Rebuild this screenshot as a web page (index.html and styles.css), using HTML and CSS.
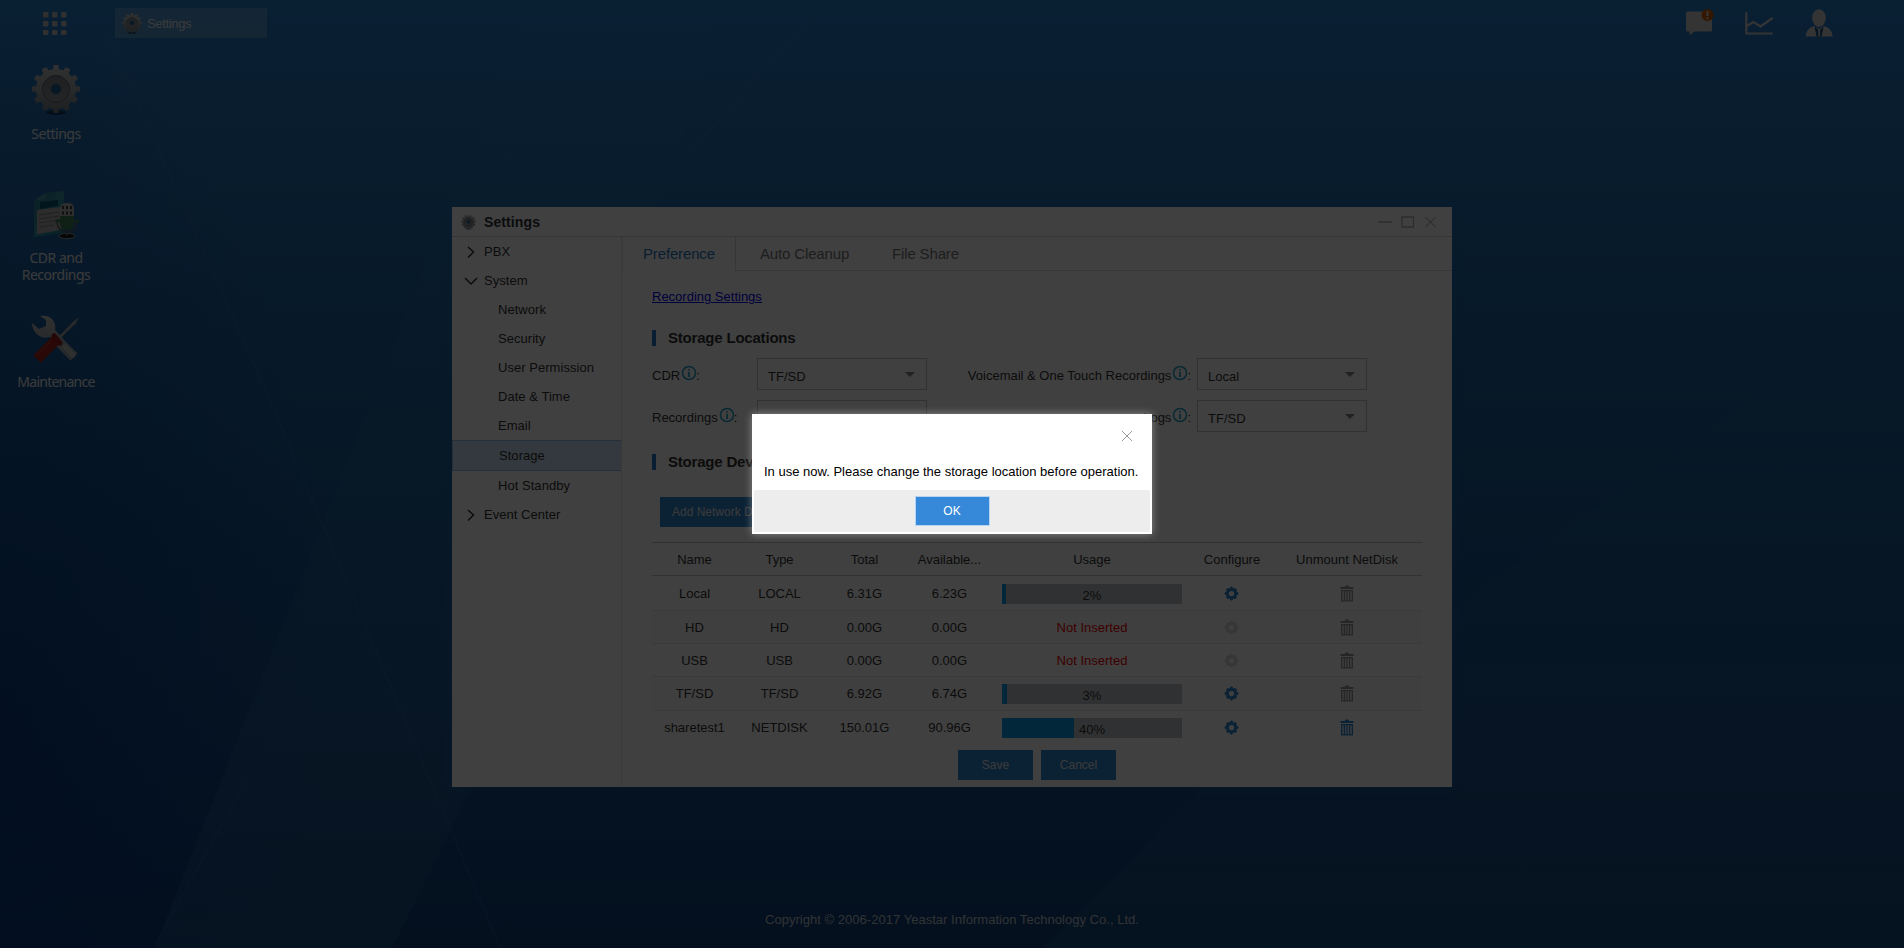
FILE: index.html
```html
<!DOCTYPE html>
<html lang="en">
<head>
<meta charset="utf-8">
<title>Settings</title>
<link rel="stylesheet" href="styles.css">
</head>
<body>
<svg width="0" height="0" class="defs" aria-hidden="true">
  <defs>
    <linearGradient id="steel" gradientUnits="userSpaceOnUse" x1="0" y1="0" x2="0" y2="48"><stop offset="0" stop-color="#c4c4c4"/><stop offset=".5" stop-color="#a0a4a8"/><stop offset="1" stop-color="#707880"/></linearGradient>
    <linearGradient id="steelDark" x1="0" y1="0" x2="0" y2="1"><stop offset="0" stop-color="#788088"/><stop offset="1" stop-color="#8c949c"/></linearGradient>
    <linearGradient id="teal" x1="0" y1="0" x2="1" y2="1"><stop offset="0" stop-color="#1c7890"/><stop offset=".5" stop-color="#3898a8"/><stop offset="1" stop-color="#188098"/></linearGradient>
    <symbol id="biggear" viewBox="0 0 48 50">
      <ellipse cx="24" cy="47.500" rx="10" ry="2.500" fill="#000" opacity=".45"/>
      <g fill="url(#steel)">
        <circle cx="24" cy="24" r="20"/>
        <path d="M21 5 21.500 0h5L27 5ZM21 43 21.500 48h5L27 43ZM5 21 0 21.500v5L5 27ZM43 21 48 21.500v5L43 27ZM30.700 6.200 33.800 2 38.300 4.600 36.200 9.400ZM38.600 11.800 43.400 9.700 46 14.200 41.800 17.300ZM41.800 30.700 46 33.800 43.400 38.300 38.600 36.200ZM36.200 38.600 38.300 43.400 33.800 46 30.700 41.800ZM17.300 41.800 14.200 46 9.700 43.400 11.800 38.600ZM9.400 36.200 4.600 38.300 2 33.800 6.200 30.700ZM6.200 17.300 2 14.200 4.600 9.700 9.400 11.800ZM11.800 9.400 9.700 4.600 14.200 2 17.300 6.200Z"/>
      </g>
      <circle cx="24" cy="24" r="13.500" fill="url(#steelDark)" stroke="#5c6468" stroke-width="1"/>
      <circle cx="24" cy="24" r="5" fill="#186098" stroke="#606c78"/>
    </symbol>
    <symbol id="gear" viewBox="0 0 16 16"><path fill="currentColor" fill-rule="evenodd" d="M6.700 1 8 .4 9.300 1 9.800 2.600 12 2.200 13.800 4 13.300 6.200 15 6.700 15.500 8 15 9.300 13.300 9.800 13.800 12 12 13.800 9.800 13.300 9.300 15 8 15.600 6.700 15 6.200 13.300 4 13.800 2.200 12 2.700 9.800 1 9.300.5 8 1 6.700 2.700 6.200 2.200 4 4 2.200 6.200 2.600ZM8 5.200a2.800 2.800 0 1 0 0 5.600 2.800 2.800 0 0 0 0-5.600Z"/></symbol>
    <symbol id="trash" viewBox="0 0 14 17"><path fill="currentColor" fill-rule="evenodd" d="M5 1.200Q5 .5 6 .5h2q1 0 1 .7V2h4.500v2H.5V2H5ZM1 5h12v11.500H1ZM2.400 6.300v8.900h1.300V6.300ZM5.200 6.300v8.900h1.200V6.300ZM7.700 6.300v8.900h1.200V6.300ZM10.300 6.300v8.900h1.300V6.300Z"/></symbol>
    <symbol id="info" viewBox="0 0 16 16"><circle cx="8" cy="8" r="6.500" fill="none" stroke="currentColor" stroke-width="1.500"/><path stroke="currentColor" stroke-width="1.700" d="M8 6.800V12M8 4v1.600"/></symbol>
    <symbol id="cross" viewBox="0 0 12 12"><path d="M.8.8 11.200 11.200M11.200.8.8 11.200" stroke="currentColor" fill="none"/></symbol>
  </defs>
</svg>
<div class="desktop">
  <svg class="wallpaper" viewBox="0 0 1904 948" preserveAspectRatio="none" aria-hidden="true">
    <defs>
      <linearGradient id="ray" x1="0" y1="0" x2="0" y2="1"><stop offset="0" stop-color="#5ab0c8" stop-opacity="0"/><stop offset="1" stop-color="#5aa8c0" stop-opacity=".17"/></linearGradient>
    </defs>
    <path fill="url(#ray)" d="M530 0 155 948H392L475 780 728 0Z" opacity=".75"/>
    <path fill="url(#ray)" d="M1904 290 1210 780 1043 948H1904Z" opacity=".5"/>
    <path fill="none" stroke="#6aa8d8" stroke-opacity=".1" stroke-width="2" d="M105 30 270 400 430 780 500 948M828 0 642 205M247 780 153 948"/>
  </svg>
  <header class="taskbar">
    <svg class="apps" viewBox="0 0 24 24"><g fill="#c0c0c0"><rect width="5.500" height="5.500" rx="1"/><rect x="9" width="5.500" height="5.500" rx="1"/><rect x="18" width="5.500" height="5.500" rx="1"/><rect y="9" width="5.500" height="5.500" rx="1"/><rect x="9" y="9" width="5.500" height="5.500" rx="1"/><rect x="18" y="9" width="5.500" height="5.500" rx="1"/><rect y="18" width="5.500" height="5" rx="1"/><rect x="9" y="18" width="5.500" height="5" rx="1"/><rect x="18" y="18" width="5.500" height="5" rx="1"/></g></svg>
    <div class="task"><svg class="task-icon"><use href="#biggear"/></svg><span>Settings</span></div>
    <div class="tray">
      <svg width="30" height="30" viewBox="0 0 30 30"><path fill="#d0d0d0" d="M2 3.500h24a1 1 0 0 1 1 1v17.500a1.500 1.500 0 0 1-1 1.500H9l-4 4-.5-4H2.500a1.500 1.500 0 0 1-1.500-1.500v-17.500Z"/><circle cx="22.500" cy="7" r="6" fill="#d05c00"/><path d="M22.500 3.300v4.700M22.500 9.200v2" stroke="#ddd" stroke-width="1.900"/></svg>
      <svg width="30" height="30" viewBox="0 0 30 30"><path fill="none" stroke="#d0d0d0" stroke-width="2.200" stroke-linecap="round" d="M1.300 5V25.500H27M2.500 17.500 8.500 14 15.500 18.500 27 10.500"/></svg>
      <svg width="30" height="30" viewBox="0 0 30 30"><ellipse cx="14" cy="10" rx="6.800" ry="8.700" fill="#d0d0d0"/><path fill="#d0d0d0" d="M9 18 14 21 19 18C23.500 20 27 21.500 27.700 28.500H.7C1.300 21.500 4.500 20 9 18Z"/><path fill="#185088" d="m9.500 18.500 3.500 3 .4 7H11.500ZM18.700 18.500l-3.500 3-.4 7H16.500Z"/></svg>
    </div>
  </header>
  <nav class="shortcuts">
    <div class="shortcut"><svg viewBox="0 0 48 50"><use href="#biggear"/></svg><span>Settings</span></div>
    <div class="shortcut"><svg class="low" viewBox="0 0 48 50">
      <path fill="url(#teal)" d="M2 9 13 2 32 0V42L2 46Z"/><path fill="#409cac" d="M2 10 14 8 13 2Z"/><path fill="#005870" d="M8 11 26 9V15L8 18Z"/><path fill="#b0b0b0" d="M5 19 29 16V39L5 43Z"/><path stroke="#808080" stroke-width="1" d="M7 24 27 21M7 28 27 25M7 32 27 29M7 36 22 34"/>
      <ellipse cx="35" cy="45" rx="8" ry="2.700" fill="#181818" stroke="#a0a0a0"/><path fill="none" stroke="#606060" stroke-width="1.500" d="M25 31q1 10 10 10t10-10M35 40v5"/><rect x="28" y="12" width="14" height="27" rx="6" fill="#408058"/><path fill="#b8b8b8" d="M28 25v-7q0-6 6-6h2q6 0 6 6v7Z"/><path stroke="#303030" stroke-width="1.800" stroke-dasharray="3 2.500" d="M31 15v9M35 15v9M39 15v9"/><path stroke="#408058" stroke-width="3" stroke-linecap="round" d="M24.500 30h4M42 30h4"/></svg><span>CDR and Recordings</span></div>
    <div class="shortcut"><svg class="low" viewBox="0 0 48 50">
      <path stroke="#a0a4a8" stroke-width="10" d="M26 26 42 42"/><path stroke="#c0c0c0" stroke-width="5" stroke-linecap="round" d="M33 32 41 40"/>
      <path fill="url(#steel)" d="M8 1C18-1 25 6 23 15L31 23 25 29 18 22C9 25 0 18 0 8L7 14 14 11 14 5Z"/>
      <path stroke="#a8a8a8" stroke-width="2.500" d="M25 25 43 7"/><path fill="#a8a8a8" d="m40 8 7-6-4 8Z"/>
      <path stroke="#a82020" stroke-width="10.500" d="M24 25 5 44"/><path stroke="#b83028" stroke-width="2" d="M19 26 5 40"/><path stroke="#981818" stroke-width="5" stroke-linecap="round" d="m22 21 6 7"/></svg><span class="tight">Maintenance</span></div>
  </nav>

  <main class="window">
    <div class="titlebar"><svg class="title-icon"><use href="#biggear"/></svg><span>Settings</span>
      <svg class="controls" width="60" height="14" viewBox="0 0 60 14"><path fill="none" stroke="#b0b0b0" stroke-width="1.300" d="M1 7h14M25 2h11.500v10H25Z"/><path fill="none" stroke="#999" d="m48.500 2 10 10m0-10-10 10"/></svg>
    </div>
    <div class="body">
      <aside class="sidebar">
        <div class="item top"><svg viewBox="0 0 14 14"><path d="m4 2 5.500 5L4 12.500"/></svg>PBX</div>
        <div class="item top"><svg viewBox="0 0 14 14"><path d="m1 4 6 6 6-6"/></svg>System</div>
        <div class="item">Network</div>
        <div class="item">Security</div>
        <div class="item">User Permission</div>
        <div class="item">Date &amp; Time</div>
        <div class="item">Email</div>
        <div class="item active">Storage</div>
        <div class="item">Hot Standby</div>
        <div class="item top"><svg viewBox="0 0 14 14"><path d="m4 2 5.500 5L4 12.500"/></svg>Event Center</div>
      </aside>
      <section class="content">
        <div class="tabs"><div class="tab on">Preference</div><div class="tab cleanup">Auto Cleanup</div><div class="tab share">File Share</div></div>
        <div class="pane">
          <div class="linkrow"><a class="reclink" href="#">Recording Settings</a></div>
          <h2 class="section">Storage Locations</h2>
          <div class="form">
            <div class="label">CDR<svg><use href="#info"/></svg>:</div><div class="select">TF/SD<i></i></div>
            <div class="label right">Voicemail &amp; One Touch Recordings<svg><use href="#info"/></svg>:</div><div class="select">Local<i></i></div>
            <div class="label">Recordings<svg><use href="#info"/></svg>:</div><div class="select">TF/SD<i></i></div>
            <div class="label right">Logs<svg><use href="#info"/></svg>:</div><div class="select">TF/SD<i></i></div>
          </div>
          <h2 class="section devices">Storage Devices</h2>
          <div class="btn add">Add Network Drive</div>
          <div class="table">
            <div class="row head"><span>Name</span><span>Type</span><span>Total</span><span>Available...</span><span>Usage</span><span>Configure</span><span>Unmount NetDisk</span></div>
            <div class="row r1"><span>Local</span><span>LOCAL</span><span>6.31G</span><span>6.23G</span><span class="bar"><i style="width:4px"></i><b>2%</b></span><svg class="g"><use href="#gear"/></svg><svg class="t"><use href="#trash"/></svg></div>
            <div class="row r2 alt"><span>HD</span><span>HD</span><span>0.00G</span><span>0.00G</span><span class="red">Not Inserted</span><svg class="g off"><use href="#gear"/></svg><svg class="t"><use href="#trash"/></svg></div>
            <div class="row r3"><span>USB</span><span>USB</span><span>0.00G</span><span>0.00G</span><span class="red">Not Inserted</span><svg class="g off"><use href="#gear"/></svg><svg class="t"><use href="#trash"/></svg></div>
            <div class="row r4 alt"><span>TF/SD</span><span>TF/SD</span><span>6.92G</span><span>6.74G</span><span class="bar"><i style="width:5px"></i><b>3%</b></span><svg class="g"><use href="#gear"/></svg><svg class="t"><use href="#trash"/></svg></div>
            <div class="row r5"><span>sharetest1</span><span>NETDISK</span><span>150.01G</span><span>90.96G</span><span class="bar"><i style="width:72px"></i><b>40%</b></span><svg class="g"><use href="#gear"/></svg><svg class="t live"><use href="#trash"/></svg></div>
          </div>
          <div class="actions"><div class="btn">Save</div><div class="btn">Cancel</div></div>
        </div>
      </section>
    </div>
  </main>
  <footer class="copyright">Copyright © 2006-2017 Yeastar Information Technology Co., Ltd.</footer>
</div>
<div class="mask">
  <div class="dialog">
    <div class="dialog-head"><svg><use href="#cross"/></svg></div>
    <p>In use now. Please change the storage location before operation.</p>
    <div class="dialog-foot"><button>OK</button></div>
  </div>
</div>
</body>
</html>
```
FILE: styles.css
```css
* { box-sizing: border-box; }
body { margin: 0; width: 1904px; height: 948px; overflow: hidden; font: 13px/16px "Liberation Sans", Arial, sans-serif; color: #333; }
.defs { position: absolute; }
.desktop {
  position: relative; height: 948px; display: flex; flex-direction: column; overflow: hidden;
  background:
    radial-gradient(ellipse 330px 700px at 0 75%, rgba(0,48,128,.5), rgba(0,48,128,0)),
    linear-gradient(180deg, #247cc8 0, #2474bc 10%, #206cac 25%, #1c609c 42%, #185490 62%, #184c88 78%, #144884 86%, #104078 100%);
}
.wallpaper { position: absolute; inset: 0; width: 100%; height: 100%; }
.taskbar { position: relative; height: 46px; display: flex; align-items: flex-start; padding-left: 43px; }
.apps { width: 24px; height: 24px; margin-top: 12px; }
.task { width: 152px; height: 30px; margin: 8px 0 0 48px; background: rgba(255,255,255,.2); color: #e8e8e8; display: flex; align-items: center; padding-left: 7px; gap: 5px; letter-spacing: -.35px; padding-top: 1px; }
.task-icon { width: 20px; height: 21px; }
.tray { margin: 8px 69px 0 auto; display: flex; gap: 30px; }
.shortcuts { position: relative; width: 112px; padding-top: 18px; display: flex; flex-direction: column; font: 14px/17px "Noto Sans", sans-serif; color: #e8e8e8; text-align: center; letter-spacing: -.5px; }
.shortcut { height: 124px; display: flex; flex-direction: column; align-items: center; gap: 10px; padding-top: 1px; }
.shortcut svg { width: 48px; height: 50px; flex: none; }
.shortcut .low { margin: 2px 0 -2px; }
.shortcut span { width: 84px; }
.shortcut .tight { letter-spacing: -.75px; }
.window { position: absolute; left: 452px; top: 207px; width: 1000px; height: 580px; background: #fff; box-shadow: 0 0 8px rgba(30,110,180,.6); display: flex; flex-direction: column; }
.titlebar { height: 30px; border-bottom: 1px solid #d4d4d4; display: flex; align-items: center; padding: 0 15px 0 9px; font-weight: bold; font-size: 14px; gap: 8px; color: #2c3038; letter-spacing: .1px; }
.title-icon { width: 15px; height: 16px; }
.controls { margin-left: auto; }
.body { flex: 1; display: flex; }
.sidebar { width: 170px; border-right: 1px solid #e6e6e6; letter-spacing: .04px; }
.item { height: 29px; line-height: 29px; padding-left: 46px; }
.item.top { padding-left: 12px; display: flex; align-items: center; gap: 6px; }
.item svg { width: 14px; height: 14px; fill: none; stroke: #333; stroke-width: 1.500; }
.item.active { height: 31px; background: #cbe3f5; border: 1px solid #91bfe2; border-right: 0; }
.content { flex: 1; }
.tabs { height: 34px; display: flex; font-size: 15px; line-height: 33px; color: #777; letter-spacing: -.15px; }
.tab { border-bottom: 1px solid #dadada; }
.tab.on { width: 114px; padding-left: 20px; color: #2979c0; border: 0; border-right: 1px solid #d8d8d8; border-left: 1px solid #e6e6e6; }
.tab.cleanup { padding-left: 24px; width: 156px; }
.tab.share { flex: 1; }
.pane { padding: 18px 30px 0; }
.linkrow { height: 16px; }
.reclink { color: #0000ee; }
.section { margin: 25px 0 0; height: 16px; border-left: 4px solid #2478c8; padding-left: 12px; font-size: 15px; line-height: 16px; letter-spacing: -.2px; }
.form { display: grid; grid-template-columns: 105px 170px 270px 170px; row-gap: 10px; margin-top: 12px; }
.form .label { height: 32px; display: flex; align-items: center; padding-top: 3px; }
.form .right { justify-content: flex-end; padding-right: 6px; }
.label svg { width: 16px; height: 16px; color: #20a0c8; margin: -5px -1px 0 1px; }
.select { height: 32px; border: 1px solid #c4c4c4; padding-left: 10px; line-height: 35px; display: flex; justify-content: space-between; }
.select i { border: 5px solid transparent; border-top-color: #888; border-bottom: 0; margin: 13px 11px 0 0; height: 5px; }
.section.devices { margin-top: 22px; }
.btn { background: #2f83cd; color: #e8e8e8; height: 30px; line-height: 30px; font-size: 12px; text-align: center; width: 75px; }
.btn.add { width: 124px; margin: 27px 0 0 8px; }
.table { margin-top: 15px; width: 770px; border-top: 1px solid #c4c4c4; }
.row { display: grid; grid-template-columns: 85px 85px 85px 85px 200px 80px 150px; align-items: center; justify-items: center; border-bottom: 1px solid #e6e6e6; }
.row > span:not(.bar) { padding-top: 1px; }
.row.alt { background: #fafafa; }
.row.head { height: 33px; border-color: #c4c4c4; padding-top: 1px; }
.r1 { height: 35px; } .r2 { height: 33px; } .r3 { height: 33px; } .r4 { height: 34px; } .r5 { height: 34px; border: 0; padding-bottom: 1px; }
.bar { display: flex; width: 180px; height: 20px; background: #c0c4c8; position: relative; margin-top: 1px; }
.bar i { background: #0898e8; }
.bar b { font-weight: normal; position: absolute; inset: 4px 0 0; text-align: center; }
.red { color: #f00000; }
.g { width: 15px; height: 15px; color: #2f83cd; margin-right: 2px; }
.g.off { color: #d8d8d8; }
.t { width: 14px; height: 17px; color: #999; }
.t.live { color: #2f83cd; }
.actions { display: flex; gap: 8px; margin: 5px 0 0 306px; }
.copyright { position: relative; margin-top: auto; padding-bottom: 20px; text-align: center; color: #c0c8d0; letter-spacing: .03px; }
.mask { position: absolute; inset: 0; width: 1904px; height: 948px; background: rgba(0,0,0,.75); display: flex; justify-content: center; }
.dialog { margin-top: 414px; width: 400px; height: 120px; background: #fff; border: 2px solid #fff; box-shadow: 0 0 8px rgba(255,255,255,.4); color: #000; display: flex; flex-direction: column; }
.dialog-head { height: 46px; display: flex; justify-content: flex-end; padding: 14px 17px 0 0; color: #999; }
.dialog-head svg { width: 12px; height: 12px; }
.dialog p { margin: 0; height: 28px; padding-left: 10px; line-height: 20px; white-space: nowrap; }
.dialog-foot { height: 42px; background: #ededed; display: flex; justify-content: center; padding-top: 6px; }
.dialog-foot button { width: 75px; height: 30px; border: 1px solid #b8d4f4; background: #3688d8; color: #fff; font: 12px "Liberation Sans", sans-serif; padding: 0; }
```
